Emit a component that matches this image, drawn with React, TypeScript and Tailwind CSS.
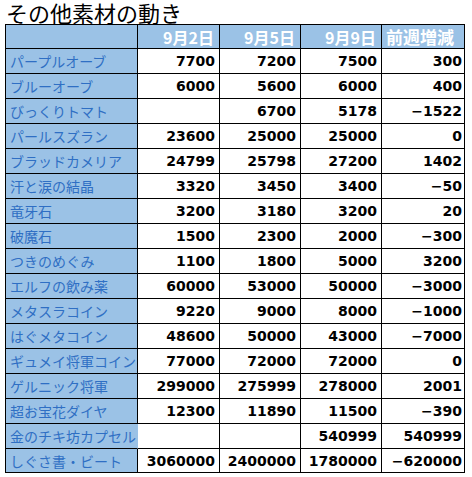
import React from "react";

type Row = { name: string; v: (string | null)[]; overflow?: boolean };

const rows: Row[] = [
  { name: "パープルオーブ", v: ["7700", "7200", "7500", "300"] },
  { name: "ブルーオーブ", v: ["6000", "5600", "6000", "400"] },
  { name: "びっくりトマト", v: [null, "6700", "5178", "−1522"] },
  { name: "パールスズラン", v: ["23600", "25000", "25000", "0"] },
  { name: "ブラッドカメリア", v: ["24799", "25798", "27200", "1402"] },
  { name: "汗と涙の結晶", v: ["3320", "3450", "3400", "−50"] },
  { name: "竜牙石", v: ["3200", "3180", "3200", "20"] },
  { name: "破魔石", v: ["1500", "2300", "2000", "−300"] },
  { name: "つきのめぐみ", v: ["1100", "1800", "5000", "3200"] },
  { name: "エルフの飲み薬", v: ["60000", "53000", "50000", "−3000"] },
  { name: "メタスラコイン", v: ["9220", "9000", "8000", "−1000"] },
  { name: "はぐメタコイン", v: ["48600", "50000", "43000", "−7000"] },
  { name: "ギュメイ将軍コイン", v: ["77000", "72000", "72000", "0"] },
  { name: "ゲルニック将軍", v: ["299000", "275999", "278000", "2001"] },
  { name: "超お宝花ダイヤ", v: ["12300", "11890", "11500", "−390"] },
  { name: "金のチキ坊カプセル", v: [null, null, "540999", "540999"], overflow: true },
  { name: "しぐさ書・ビート", v: ["3060000", "2400000", "1780000", "−620000"] },
];

export default function App() {
  return (
    <div className="w-[472px] h-[477px] bg-white overflow-hidden font-['Noto_Sans_CJK_JP','Noto_Sans',sans-serif]">
      <div className="h-[24px] pl-[6px] text-[22px] leading-[25px] text-black whitespace-nowrap">
        その他素材の動き
      </div>
      <div className="ml-[5px] w-[460px] grid grid-cols-[132px_82px_81px_81px_83px] border-l border-t border-black">
        <div className="h-[24px] bg-[#9bc2e6] border-r border-b border-black" />
        {["9月2日", "9月5日", "9月9日"].map((h) => (
          <div
            key={h}
            className="h-[24px] bg-[#9bc2e6] border-r border-b border-black flex items-center justify-end pr-[5px] text-white font-bold text-[16px] leading-none"
          >
            {h}
          </div>
        ))}
        <div className="h-[24px] bg-[#9bc2e6] border-r border-b border-black flex items-center justify-end pr-[10px] text-white font-bold text-[17px] leading-none">
          前週増減
        </div>
        {rows.map((r, ri) => {
          const last = ri === rows.length - 1;
          return (
            <React.Fragment key={r.name}>
              <div
                className={`${last ? "h-[24px]" : "h-[25px]"} relative bg-[#9bc2e6] border-b border-black flex items-center pl-[4px] whitespace-nowrap text-[14px] leading-none text-[#2f6fc4] ${r.overflow ? "border-r border-r-[#9bc2e6]" : "border-r"}`}
              >
                <span className="relative z-10">{r.name}</span>
              </div>
              {r.v.map((v, i) => (
                <div
                  key={i}
                  className={`${last ? "h-[24px]" : "h-[25px]"} bg-white border-r border-b border-black flex items-center justify-end ${i === 3 ? "pr-[2px]" : "pr-[4px]"} text-[14px] font-bold leading-none text-black font-['DejaVu_Sans','Liberation_Sans',sans-serif]`}
                >
                  {v ?? ""}
                </div>
              ))}
            </React.Fragment>
          );
        })}
      </div>
    </div>
  );
}
